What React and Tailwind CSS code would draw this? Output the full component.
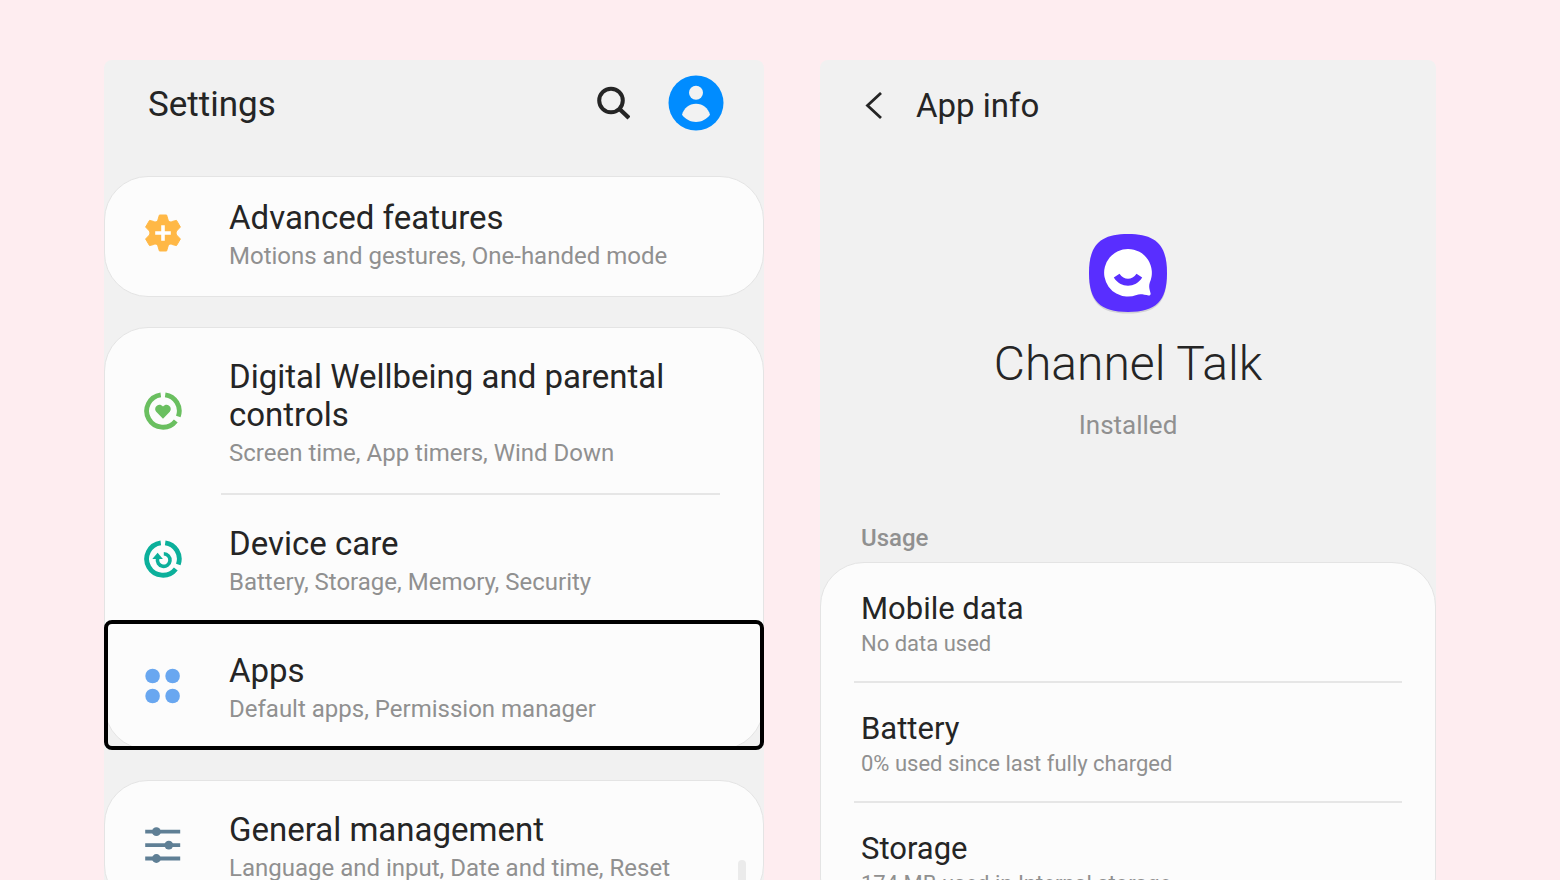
import React from 'react';

function SearchIcon() {
  return (
    <svg width="34" height="34" viewBox="0 0 34 34" fill="none" stroke="#252525" strokeWidth="4">
      <circle cx="15" cy="14.5" r="11.8" />
      <path d="M23.5 23L33 32" strokeWidth="4.4" />
    </svg>
  );
}

function AvatarIcon() {
  return (
    <svg width="56" height="56" viewBox="0 0 56 56">
      <circle cx="28" cy="28" r="27.5" fill="#008cff" />
      <circle cx="28" cy="17.7" r="7" fill="#f2f2f2" />
      <path d="M14 39.8C16 33 21 28.8 28 28.8S40 33 42 39.8C38.5 44.5 33.5 47 28 47S17.5 44.5 14 39.8Z" fill="#f2f2f2" />
    </svg>
  );
}

function BackIcon() {
  return (
    <svg width="18" height="28" viewBox="0 0 18 28" fill="none" stroke="#252525" strokeWidth="2.8">
      <path d="M17 1L3.5 13.5L17 26" />
    </svg>
  );
}

function AdvancedIcon() {
  return (
    <svg width="38" height="38" viewBox="0 0 38 38">
      <path
        d="M15.4 1H22.6L24.3 6.6C25.5 8 27 8.3 28.8 7.3L32.5 6.4L36.4 13L32.6 17C31.9 18.4 31.9 19.6 32.6 21L36.4 25L32.5 31.6L28.8 30.7C27 29.7 25.5 30 24.3 31.4L22.6 37H15.4L13.7 31.4C12.5 30 11 29.7 9.2 30.7L5.5 31.6L1.6 25L5.4 21C6.1 19.6 6.1 18.4 5.4 17L1.6 13L5.5 6.4L9.2 7.3C11 8.3 12.5 8 13.7 6.6Z"
        fill="#ffb846"
        stroke="#ffb846"
        strokeLinejoin="round"
      />
      <path d="M19 11.2V26.8M11.2 19H26.8" stroke="#fff" strokeWidth="3.6" />
    </svg>
  );
}

// Broken ring shared by the wellbeing and device care icons
function BrokenRing({ color }) {
  return (
    <g fill="none" stroke={color} strokeWidth="4.8">
      <path d="M21.2 2.8A16.3 16.3 0 0 1 34.3 24.5" />
      <path d="M31.8 29A16.3 16.3 0 1 1 16.8 2.8" />
    </g>
  );
}

function WellbeingIcon() {
  return (
    <svg width="38" height="38" viewBox="0 0 38 38">
      <BrokenRing color="#6abf60" />
      <path d="M19 26.8L12.2 19.8C8.8 15.5 14.8 9.8 19 14.5C23.2 9.8 29.2 15.5 25.8 19.8Z" fill="#6abf60" />
    </svg>
  );
}

function DeviceCareIcon() {
  return (
    <svg width="38" height="38" viewBox="0 0 38 38">
      <BrokenRing color="#0cb09b" />
      <path d="M19.8 13.8A6.3 6.3 0 1 1 13.6 18.5" fill="none" stroke="#0cb09b" strokeWidth="3.6" />
      <path d="M8.3 19L13.6 12.8L18.9 19Z" fill="#0cb09b" />
    </svg>
  );
}

function AppsIcon() {
  return (
    <svg width="38" height="38" viewBox="0 0 38 38" fill="#69a7f0">
      <circle cx="8.6" cy="9" r="7.3" />
      <circle cx="28.6" cy="9" r="7.3" />
      <circle cx="8.6" cy="29" r="7.3" />
      <circle cx="28.6" cy="29" r="7.3" />
    </svg>
  );
}

function GeneralIcon() {
  return (
    <svg width="38" height="38" viewBox="0 0 38 38" fill="#5f7f95">
      <path d="M1.2 3.8H36.2V7.6H1.2ZM1.2 17.2H36.2V21H1.2ZM1.2 30.6H36.2V34.4H1.2Z" />
      <circle cx="12.4" cy="5.7" r="4.4" />
      <circle cx="24.8" cy="19.1" r="4.4" />
      <circle cx="12.4" cy="32.5" r="4.4" />
    </svg>
  );
}

function ChannelTalkIcon() {
  return (
    <svg width="80" height="82" viewBox="0 0 80 82">
      <path d="M40 3C68 3 79 13 79 41.500S68 80.500 40 80.500S1 70 1 41.500S12 3 40 3Z" fill="#d2d2d6" />
      <path d="M40 1C68 1 79 12 79 40S68 79 40 79S1 68 1 40S12 1 40 1Z" fill="#592eff" />
      <path
        d="M40 16A23.800 23.800 0 1 0 48.500 62C52 60.500 56.500 61.800 60.500 62.500C62 62.700 63 61.500 62.500 60C61.500 56.500 60.500 53.500 61.800 49.500A23.800 23.800 0 0 0 40 16Z"
        fill="#fff"
      />
      <path d="M25.800 44.500L31.500 40.800C36 47.500 44 47.500 48.500 40.800L54.200 44.500C47.500 55.500 32.500 55.500 25.800 44.500Z" fill="#592eff" />
    </svg>
  );
}

function Card({ children }) {
  return (
    <section className="overflow-hidden rounded-[44px] border border-[#e4e4e4] bg-[#fcfcfc]">
      {children}
    </section>
  );
}

function SettingsRow({ icon, title, description }) {
  return (
    <a href="#" className="flex items-center gap-[47px] pr-[43px] pl-[39px]">
      <span className="shrink-0">{icon}</span>
      <span className="flex min-w-0 flex-col gap-[3px] pt-[30px] pb-6">
        <span className="text-[33px] leading-[38px] text-[#252525]">{title}</span>
        <span className="text-[24px] leading-8 text-[#909090]">{description}</span>
      </span>
    </a>
  );
}

function UsageRow({ title, description }) {
  return (
    <a href="#" className="flex flex-col px-10 pt-7 pb-5">
      <span className="text-[31px] leading-9 text-[#252525]">{title}</span>
      <span className="text-[22px] leading-[34px] text-[#909090]">{description}</span>
    </a>
  );
}

function SettingsPanel() {
  return (
    <main className="relative rounded-t-lg bg-[#f1f1f1]">
      <header className="flex items-center justify-between pt-[15px] pr-10 pb-[45px] pl-11">
        <h1 className="pt-1 text-[35px] leading-10 text-[#252525]">Settings</h1>
        <div className="flex items-center gap-[38px]">
          <button type="button" aria-label="Search"><SearchIcon /></button>
          <button type="button" aria-label="Account"><AvatarIcon /></button>
        </div>
      </header>

      <div className="flex flex-col gap-[30px]">
        <Card>
          {/* partly scrolled under the header */}
          <div className="-mt-2">
            <SettingsRow
              icon={<AdvancedIcon />}
              title="Advanced features"
              description="Motions and gestures, One-handed mode"
            />
          </div>
        </Card>

        <div className="relative">
          <Card>
            <SettingsRow
              icon={<WellbeingIcon />}
              title="Digital Wellbeing and parental controls"
              description="Screen time, App timers, Wind Down"
            />
            <hr className="mr-[43px] ml-[116px] border-t-2 border-[#e6e6e6]" />
            <SettingsRow
              icon={<DeviceCareIcon />}
              title="Device care"
              description="Battery, Storage, Memory, Security"
            />
            <SettingsRow
              icon={<AppsIcon />}
              title="Apps"
              description="Default apps, Permission manager"
            />
          </Card>
          {/* Highlight around the Apps row */}
          <div className="pointer-events-none absolute inset-x-0 bottom-0 h-[130px] rounded-lg border-4 border-black" />
        </div>

        <Card>
          <SettingsRow
            icon={<GeneralIcon />}
            title="General management"
            description="Language and input, Date and time, Reset"
          />
        </Card>
      </div>
      <div className="absolute top-[800px] right-[18px] h-20 w-2 rounded-full bg-[#ebebeb]" />
    </main>
  );
}

function AppInfoPanel() {
  return (
    <aside className="rounded-t-lg bg-[#f1f1f1]">
      <header className="flex items-center gap-[34px] px-11 pt-[26px]">
        <button type="button" aria-label="Back"><BackIcon /></button>
        <h2 className="text-[33px] leading-10 text-[#252525]">App info</h2>
      </header>

      <div className="flex flex-col items-center pt-[107px]">
        <ChannelTalkIcon />
        <h3 className="mt-5 text-5xl leading-[58px] font-light text-[#252525]">Channel Talk</h3>
        <p className="mt-4 text-[26px] leading-8 text-[#909090]">Installed</p>
      </div>

      <h4 className="mt-[81px] px-[41px] pb-2 text-[24px] leading-8 font-medium text-[#909090]">Usage</h4>
      <Card>
        <UsageRow title="Mobile data" description="No data used" />
        <hr className="mx-[33px] border-t-2 border-[#e6e6e6]" />
        <UsageRow title="Battery" description="0% used since last fully charged" />
        <hr className="mx-[33px] border-t-2 border-[#e6e6e6]" />
        <UsageRow title="Storage" description="174 MB used in Internal storage" />
      </Card>
    </aside>
  );
}

export default function App() {
  return (
    <div className="grid h-screen grid-cols-[660fr_616fr] gap-14 overflow-hidden bg-[#feedf0] pt-[60px] pr-[124px] pl-[104px] font-['Roboto',sans-serif]">
      <SettingsPanel />
      <AppInfoPanel />
    </div>
  );
}
